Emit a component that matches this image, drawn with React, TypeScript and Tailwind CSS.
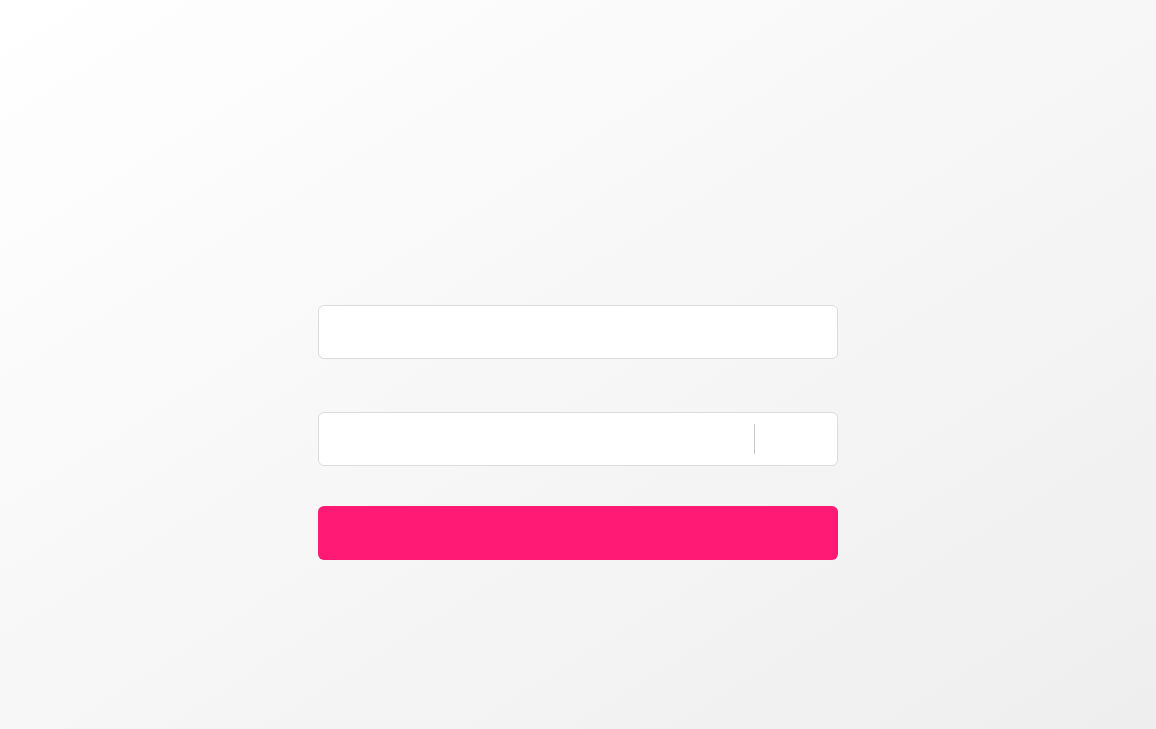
export default function App() {
  return (
    <div className="w-[1156px] h-[729px] bg-[linear-gradient(to_bottom_right,#ffffff_0%,#eeeeee_100%)] flex flex-col items-center pt-[305px] font-['Liberation_Sans',sans-serif]">
      <div className="w-[520px] flex flex-col">
        <div className="h-[54px] bg-white border border-[#dcdcdc] rounded-[6px]" />
        <div className="h-[54px] mt-[53px] bg-white border border-[#dcdcdc] rounded-[6px] flex items-center">
          <div className="flex-1" />
          <div className="w-px h-[30px] bg-[#c8c8c8] mr-[82px]" />
        </div>
        <button className="h-[54px] mt-[40px] bg-[#ff1b75] rounded-[6px]" />
      </div>
    </div>
  );
}
